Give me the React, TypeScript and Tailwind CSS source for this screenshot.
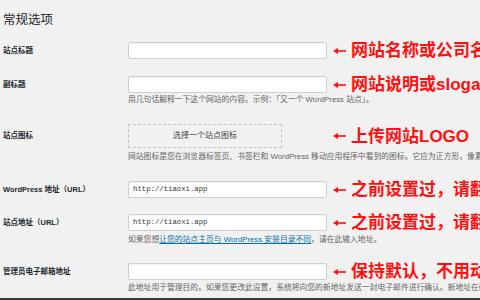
import React from 'react';

const cjk = { fontFamily: '"Liberation Sans", "Noto Sans CJK SC", sans-serif' };
const mono = { fontFamily: '"Liberation Mono", monospace' };

const Arrow: React.FC = () => (
  <svg width="13" height="8" viewBox="0 0 13 8" className="shrink-0">
    <polygon points="0,4 5,1 5,7" fill="#ff1010" />
    <line x1="4" y1="4" x2="13" y2="4" stroke="#ff1010" strokeWidth="1.6" />
  </svg>
);

const Note: React.FC<{ text: string }> = ({ text }) => (
  <div className="ml-[6px] flex items-center gap-[5px] whitespace-nowrap">
    <Arrow />
    <span className="text-[17px] leading-[17px] font-bold text-[#ff1010]">{text}</span>
  </div>
);

const Label: React.FC<{ children: React.ReactNode }> = ({ children }) => (
  <div className="w-[128px] shrink-0 pl-[3px] text-[7.5px] font-semibold text-[#23282d] whitespace-nowrap">
    {children}
  </div>
);

const Input: React.FC<{ value?: string }> = ({ value }) => (
  <div className="h-[17px] w-[199px] shrink-0 flex items-center rounded-[2px] border border-[#cfcfcf] bg-white px-[4px] shadow-[inset_0_1px_1px_rgba(0,0,0,0.05)]">
    {value && (
      <span className="text-[7.3px] text-[#32373c]" style={mono}>
        {value}
      </span>
    )}
  </div>
);

const Help: React.FC<{ children: React.ReactNode; className?: string }> = ({ children, className }) => (
  <p className={`ml-[128px] text-[7.8px] leading-[10px] text-[#666] whitespace-nowrap ${className ?? ''}`}>
    {children}
  </p>
);

const App: React.FC = () => {
  return (
    <div className="h-[300px] w-[480px] overflow-hidden bg-[#f1f1f1] flex flex-col" style={cjk}>
      <h1 className="pt-[12px] pl-[3px] text-[12.5px] leading-[16px] font-normal text-[#23282d]">常规选项</h1>

      <div className="mt-[14px] flex items-center">
        <Label>站点标题</Label>
        <Input />
        <Note text="网站名称或公司名称" />
      </div>

      <div className="mt-[17px] flex items-center">
        <Label>副标题</Label>
        <Input />
        <Note text="网站说明或slogan" />
      </div>
      <Help className="mt-[2px]">用几句话解释一下这个网站的内容。示例：「又一个 WordPress 站点」。</Help>

      <div className="mt-[19px] flex items-center">
        <Label>站点图标</Label>
        <div className="h-[24px] w-[154px] shrink-0 flex items-center justify-center border border-dashed border-[#c3c3c3] text-[8px] text-[#444]">
          选择一个站点图标
        </div>
        <div className="ml-[45px]">
          <Note text="上传网站LOGO" />
        </div>
      </div>
      <Help className="mt-[4px]">
        网站图标是您在浏览器标签页、书签栏和 WordPress 移动应用程序中看到的图标。它应为正方形，像素至少为 512 × 512。
      </Help>

      <div className="mt-[19px] flex items-center">
        <Label>WordPress 地址（URL）</Label>
        <Input value="http://tiaoxi.app" />
        <Note text="之前设置过，请翻看" />
      </div>

      <div className="mt-[16px] flex items-center">
        <Label>站点地址（URL）</Label>
        <Input value="http://tiaoxi.app" />
        <Note text="之前设置过，请翻看" />
      </div>
      <Help className="mt-[4px]">
        如果您想<a className="text-[#0073aa] underline">让您的站点主页与 WordPress 安装目录不同</a>，请在此输入地址。
      </Help>

      <div className="mt-[18px] flex items-center">
        <Label>管理员电子邮箱地址</Label>
        <Input />
        <Note text="保持默认，不用动" />
      </div>
      <Help className="mt-[3px]">
        此地址用于管理目的。如果您更改此设置，系统将向您的新地址发送一封电子邮件进行确认。新地址在确认之前不会生效。
      </Help>

      <div className="mt-auto h-[2px] bg-[#3a3a3a]" />
    </div>
  );
};

export default App;
